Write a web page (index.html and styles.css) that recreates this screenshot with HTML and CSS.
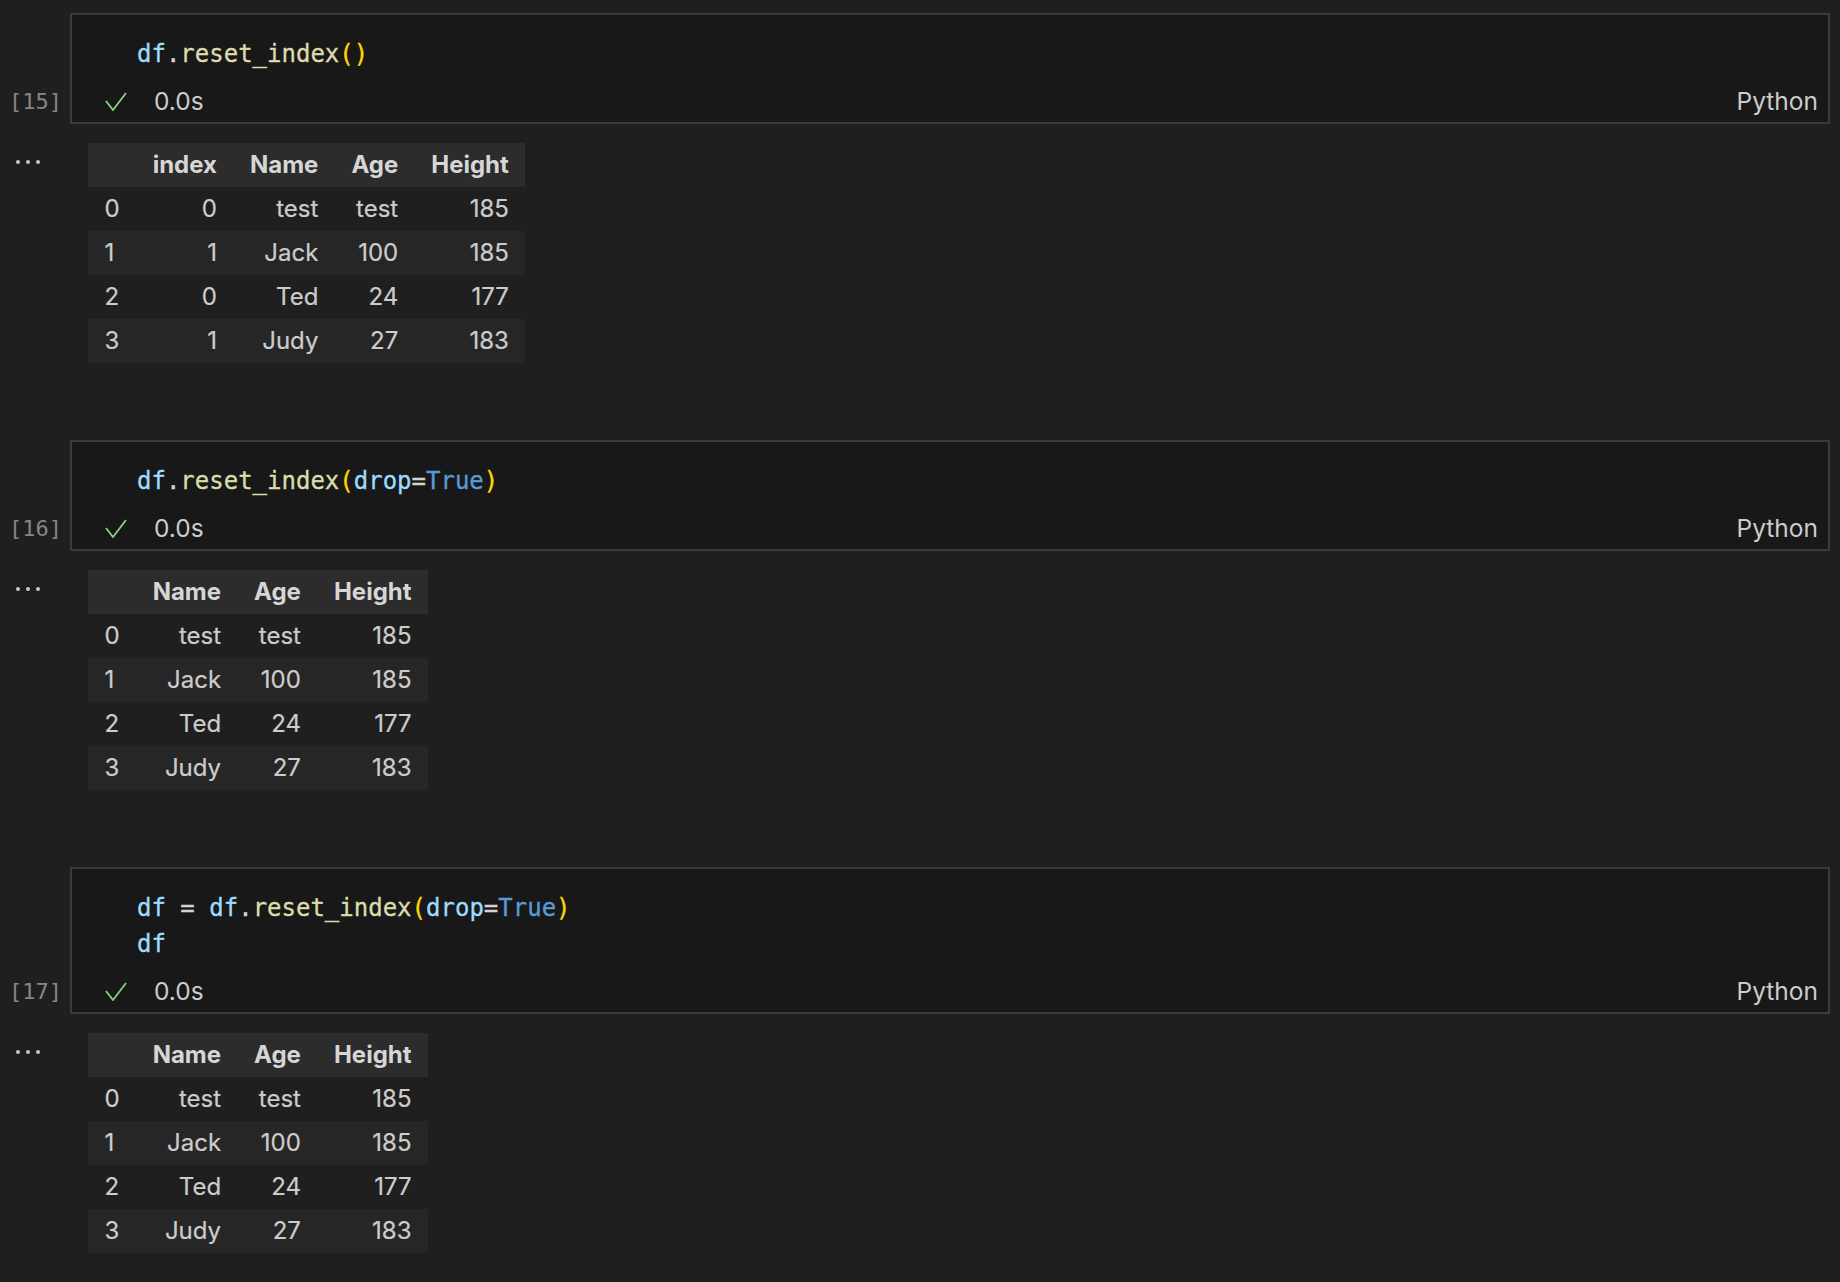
FILE: index.html
```html
<!DOCTYPE html>
<html lang="en">
<head>
<meta charset="utf-8">
<title>Notebook</title>
<link rel="stylesheet" href="styles.css">
</head>
<body>
<main class="notebook">

  <section class="cell">
    <div class="cell-row">
      <div class="gutter"><span class="exec-count">[15]</span></div>
      <div class="editor">
        <pre class="code"><span class="var">df</span><span class="pun">.</span><span class="fn">reset_index</span><span class="br">()</span></pre>
        <div class="status">
          <svg class="check" viewBox="0 0 22 19" width="22" height="19"><polyline points="1,9 8,18 21,1" fill="none" stroke="#89d185" stroke-width="1.8"/></svg>
          <span class="dur">0.0s</span>
          <span class="lang">Python</span>
        </div>
      </div>
    </div>
    <div class="output-row">
      <div class="gutter out"><svg class="dots" viewBox="0 0 30 6" width="30" height="6"><circle cx="5" cy="3" r="2"/><circle cx="15" cy="3" r="2"/><circle cx="25" cy="3" r="2"/></svg></div>
      <table class="dataframe">
        <thead>
          <tr><th></th><th>index</th><th>Name</th><th>Age</th><th>Height</th></tr>
        </thead>
        <tbody>
          <tr><th>0</th><td>0</td><td>test</td><td>test</td><td>185</td></tr>
          <tr><th>1</th><td>1</td><td>Jack</td><td>100</td><td>185</td></tr>
          <tr><th>2</th><td>0</td><td>Ted</td><td>24</td><td>177</td></tr>
          <tr><th>3</th><td>1</td><td>Judy</td><td>27</td><td>183</td></tr>
        </tbody>
      </table>
    </div>
  </section>

  <section class="cell">
    <div class="cell-row">
      <div class="gutter"><span class="exec-count">[16]</span></div>
      <div class="editor">
        <pre class="code"><span class="var">df</span><span class="pun">.</span><span class="fn">reset_index</span><span class="br">(</span><span class="var">drop</span><span class="pun">=</span><span class="kw">True</span><span class="br">)</span></pre>
        <div class="status">
          <svg class="check" viewBox="0 0 22 19" width="22" height="19"><polyline points="1,9 8,18 21,1" fill="none" stroke="#89d185" stroke-width="1.8"/></svg>
          <span class="dur">0.0s</span>
          <span class="lang">Python</span>
        </div>
      </div>
    </div>
    <div class="output-row">
      <div class="gutter out"><svg class="dots" viewBox="0 0 30 6" width="30" height="6"><circle cx="5" cy="3" r="2"/><circle cx="15" cy="3" r="2"/><circle cx="25" cy="3" r="2"/></svg></div>
      <table class="dataframe">
        <thead>
          <tr><th></th><th>Name</th><th>Age</th><th>Height</th></tr>
        </thead>
        <tbody>
          <tr><th>0</th><td>test</td><td>test</td><td>185</td></tr>
          <tr><th>1</th><td>Jack</td><td>100</td><td>185</td></tr>
          <tr><th>2</th><td>Ted</td><td>24</td><td>177</td></tr>
          <tr><th>3</th><td>Judy</td><td>27</td><td>183</td></tr>
        </tbody>
      </table>
    </div>
  </section>

  <section class="cell">
    <div class="cell-row">
      <div class="gutter"><span class="exec-count">[17]</span></div>
      <div class="editor">
        <pre class="code"><span class="var">df</span><span class="pun"> = </span><span class="var">df</span><span class="pun">.</span><span class="fn">reset_index</span><span class="br">(</span><span class="var">drop</span><span class="pun">=</span><span class="kw">True</span><span class="br">)</span>
<span class="var">df</span></pre>
        <div class="status">
          <svg class="check" viewBox="0 0 22 19" width="22" height="19"><polyline points="1,9 8,18 21,1" fill="none" stroke="#89d185" stroke-width="1.8"/></svg>
          <span class="dur">0.0s</span>
          <span class="lang">Python</span>
        </div>
      </div>
    </div>
    <div class="output-row">
      <div class="gutter out"><svg class="dots" viewBox="0 0 30 6" width="30" height="6"><circle cx="5" cy="3" r="2"/><circle cx="15" cy="3" r="2"/><circle cx="25" cy="3" r="2"/></svg></div>
      <table class="dataframe">
        <thead>
          <tr><th></th><th>Name</th><th>Age</th><th>Height</th></tr>
        </thead>
        <tbody>
          <tr><th>0</th><td>test</td><td>test</td><td>185</td></tr>
          <tr><th>1</th><td>Jack</td><td>100</td><td>185</td></tr>
          <tr><th>2</th><td>Ted</td><td>24</td><td>177</td></tr>
          <tr><th>3</th><td>Judy</td><td>27</td><td>183</td></tr>
        </tbody>
      </table>
    </div>
  </section>

</main>
</body>
</html>
```

FILE: styles.css
```css
html, body {
  margin: 0;
  padding: 0;
  background: #1f1f1f;
}

body {
  width: 1840px;
  height: 1282px;
  overflow: hidden;
  font-family: Inter, "Liberation Sans", sans-serif;
  color: #cccccc;
}

.notebook {
  display: flex;
  flex-direction: column;
  padding-top: 13px;
}

.cell {
  display: flex;
  flex-direction: column;
  margin-bottom: 77px;
}

.cell-row {
  display: grid;
  grid-template-columns: 70px 1760px;
}

.gutter {
  display: flex;
  flex-direction: column;
  justify-content: flex-end;
}

.exec-count {
  font-family: "DejaVu Sans Mono", monospace;
  font-size: 22px;
  line-height: 40px;
  color: #868686;
  padding-left: 9px;
  margin-bottom: 2px;
}

.editor {
  background: #181818;
  border: 2px solid #3b3b3e;
  display: flex;
  flex-direction: column;
  padding-top: 21px;
  padding-bottom: 1px;
}

.code {
  margin: 0 0 9px 0;
  padding-left: 65px;
  font-family: "DejaVu Sans Mono", monospace;
  font-size: 24px;
  line-height: 36px;
  color: #d4d4d4;
  -webkit-text-stroke: 0.3px currentColor;
}

.var { color: #9cdcfe; }
.fn  { color: #dcdcaa; }
.br  { color: #ffd700; }
.kw  { color: #569cd6; }
.pun { color: #d4d4d4; }

.status {
  display: flex;
  align-items: center;
  height: 40px;
  line-height: 40px;
  font-size: 24.5px;
  color: #cccccc;
  padding-left: 33px;
  padding-right: 10px;
}

.check {
  display: block;
}

.dur {
  margin-left: 27px;
}

.lang {
  margin-left: auto;
}

.output-row {
  display: grid;
  grid-template-columns: 70px auto;
  justify-content: start;
  margin-top: 19px;
}

.gutter.out {
  justify-content: flex-start;
  padding-top: 16px;
  padding-left: 13px;
}

.dots {
  display: block;
  fill: #c8c8c8;
}

.dataframe {
  margin-left: 18px;
  border-collapse: collapse;
  border-spacing: 0;
  font-size: 24px;
  color: #cccccc;
}

.dataframe th,
.dataframe td {
  height: 44px;
  line-height: 44px;
  padding: 0 16.5px;
  text-align: right;
  white-space: nowrap;
  -webkit-text-stroke: 0.2px currentColor;
}

.dataframe thead th {
  background: #2c2c2c;
  font-weight: 700;
  color: #d6d6d6;
  -webkit-text-stroke: 0;
}

.dataframe tbody th {
  font-weight: 400;
  text-align: left;
}

.dataframe tbody tr:nth-child(even) {
  background: #262626;
}
```
